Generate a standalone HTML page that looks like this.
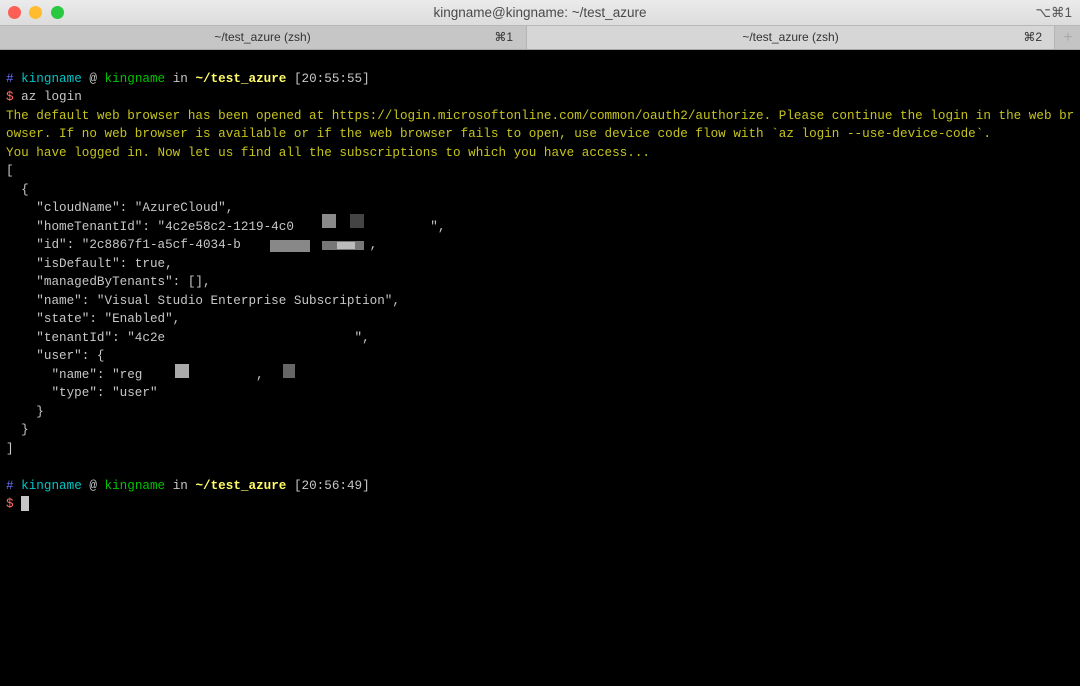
<!DOCTYPE html>
<html><head><meta charset="utf-8"><style>
*{margin:0;padding:0;box-sizing:border-box}
body{width:1080px;height:686px;overflow:hidden;background:#000;font-family:"Liberation Sans",sans-serif;position:relative}
.title{position:absolute;left:0;top:0;width:1080px;height:25px;background:linear-gradient(#ebebeb,#dcdcdc);text-align:center;font-size:13.5px;color:#4a4a4a;line-height:25px}
.dot{position:absolute;top:6px;width:13px;height:13px;border-radius:50%}
.tabs{position:absolute;left:0;top:25px;width:1080px;height:25px;background:#c4c4c4;border-top:1px solid #b8b8b8;border-bottom:1px solid #a8a8a8}
.tab{position:absolute;top:0;height:23px;line-height:23px;text-align:center;font-size:12px;color:#333}
.k{position:absolute;right:12px;top:0;font-size:12px}
pre{position:absolute;left:6px;top:51px;font-family:"Liberation Mono",monospace;font-size:12.63px;line-height:18.5px;color:#c7c7c7;white-space:pre}
.y{color:#c6c41c}.b{color:#6871ff}.c{color:#00c5c7}.g{color:#00c200}.p{color:#fffc67;font-weight:bold}.r{color:#ff6e67}
.blk{position:absolute}
</style></head><body>
<div class="title">kingname@kingname: ~/test_azure<span style="position:absolute;right:8px;color:#555">⌥⌘1</span></div>
<div class="dot" style="left:8px;background:#fd5f57"></div>
<div class="dot" style="left:29px;background:#febc2e"></div>
<div class="dot" style="left:51px;background:#28c840"></div>
<div class="tabs">
<div class="tab" style="left:0;width:525px;background:#c6c6c6">~/test_azure (zsh)<span class="k">⌘1</span></div>
<div class="tab" style="left:526px;width:529px;background:#d6d6d6;border-left:1px solid #b5b5b5;border-right:1px solid #b5b5b5">~/test_azure (zsh)<span class="k">⌘2</span></div>
<div class="tab" style="left:1056px;width:24px;color:#aaa;font-size:16px">+</div>
</div>
<pre>

<span class="b">#</span> <span class="c">kingname</span> @ <span class="g">kingname</span> in <span class="p">~/test_azure</span> [20:55:55]
<span class="r">$</span> az login
<span class="y">The default web browser has been opened at https://login.microsoftonline.com/common/oauth2/authorize. Please continue the login in the web br
owser. If no web browser is available or if the web browser fails to open, use device code flow with `az login --use-device-code`.
You have logged in. Now let us find all the subscriptions to which you have access...</span>
[
  {
    "cloudName": "AzureCloud",
    "homeTenantId": "4c2e58c2-1219-4c0                  ",
    "id": "2c8867f1-a5cf-4034-b                 ,
    "isDefault": true,
    "managedByTenants": [],
    "name": "Visual Studio Enterprise Subscription",
    "state": "Enabled",
    "tenantId": "4c2e                         ",
    "user": {
      "name": "reg               ,
      "type": "user"
    }
  }
]

<span class="b">#</span> <span class="c">kingname</span> @ <span class="g">kingname</span> in <span class="p">~/test_azure</span> [20:56:49]
<span class="r">$</span> <span style="background:#c7c7c7"> </span>
</pre>
<div class="blk" style="left:322px;top:214px;width:14px;height:14px;background:#8a8a8a"></div>
<div class="blk" style="left:350px;top:214px;width:14px;height:14px;background:#444"></div>
<div class="blk" style="left:270px;top:240px;width:40px;height:12px;background:#888"></div>
<div class="blk" style="left:322px;top:241px;width:42px;height:9px;background:#777"></div>
<div class="blk" style="left:337px;top:242px;width:18px;height:7px;background:#bbb"></div>
<div class="blk" style="left:175px;top:364px;width:14px;height:14px;background:#aaa"></div>
<div class="blk" style="left:283px;top:364px;width:12px;height:14px;background:#666"></div>
</body></html>
